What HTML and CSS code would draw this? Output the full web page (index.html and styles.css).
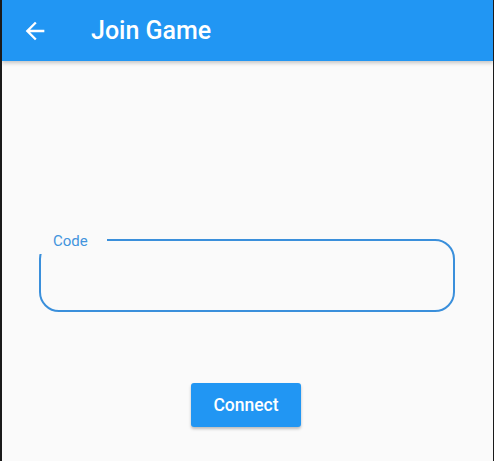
FILE: index.html
```html
<!DOCTYPE html>
<html>
<head>
<meta charset="utf-8">
<link rel="stylesheet" href="styles.css">
</head>
<body>
<div class="frame">
  <header class="appbar">
    <svg class="back" width="28" height="28" viewBox="0 0 24 24"><path d="M20 11H7.83l5.59-5.59L12 4l-8 8 8 8 1.41-1.41L7.83 13H20v-2z" fill="#fff"/></svg>
    <h1 class="title">Join Game</h1>
  </header>
  <main class="content">
    <div class="field">
      <span class="label">Code</span>
    </div>
    <button class="btn">Connect</button>
  </main>
</div>
</body>
</html>
```
FILE: styles.css
```css
html, body { margin: 0; padding: 0; }
body { background: #fafafa; font-family: Roboto, "Noto Sans", sans-serif; }
.frame {
  width: 494px; height: 461px; box-sizing: border-box;
  border-left: 2px solid #1a1a1a; border-right: 1px solid #1a1a1a;
  background: #fafafa; overflow: hidden;
}
.appbar {
  height: 61px; background: #2196f3;
  display: flex; align-items: center;
  box-shadow: 0 2px 4px rgba(0,0,0,0.22);
  position: relative; z-index: 1;
}
.back { margin-left: 19px; margin-top: 1px; }
.title {
  margin: 0 0 0 42px; color: #fff; font-size: 25px; font-weight: 500;
  letter-spacing: 0;
}
.content {
  display: flex; flex-direction: column; align-items: center;
  padding-top: 178px;
}
.field {
  position: relative; box-sizing: border-box;
  width: 416px; height: 73px; margin-left: -1px;
  border: 2px solid #3a8fdb; border-radius: 20px;
}
.label {
  position: absolute; left: -3px; top: -9px;
  background: #fafafa; color: #4294dd;
  font-size: 15px; line-height: 18px;
  padding: 0 18px 4px 15px; width: 36px;
}
.btn {
  margin-top: 71px; width: 110px; height: 44px;
  background: #2196f3; color: #fff; border: none; border-radius: 3px;
  font-family: Roboto, sans-serif; font-size: 17.5px; font-weight: 500;
  box-shadow: 0 2px 3px rgba(0,0,0,0.25);
  margin-left: -3px;
}
```
